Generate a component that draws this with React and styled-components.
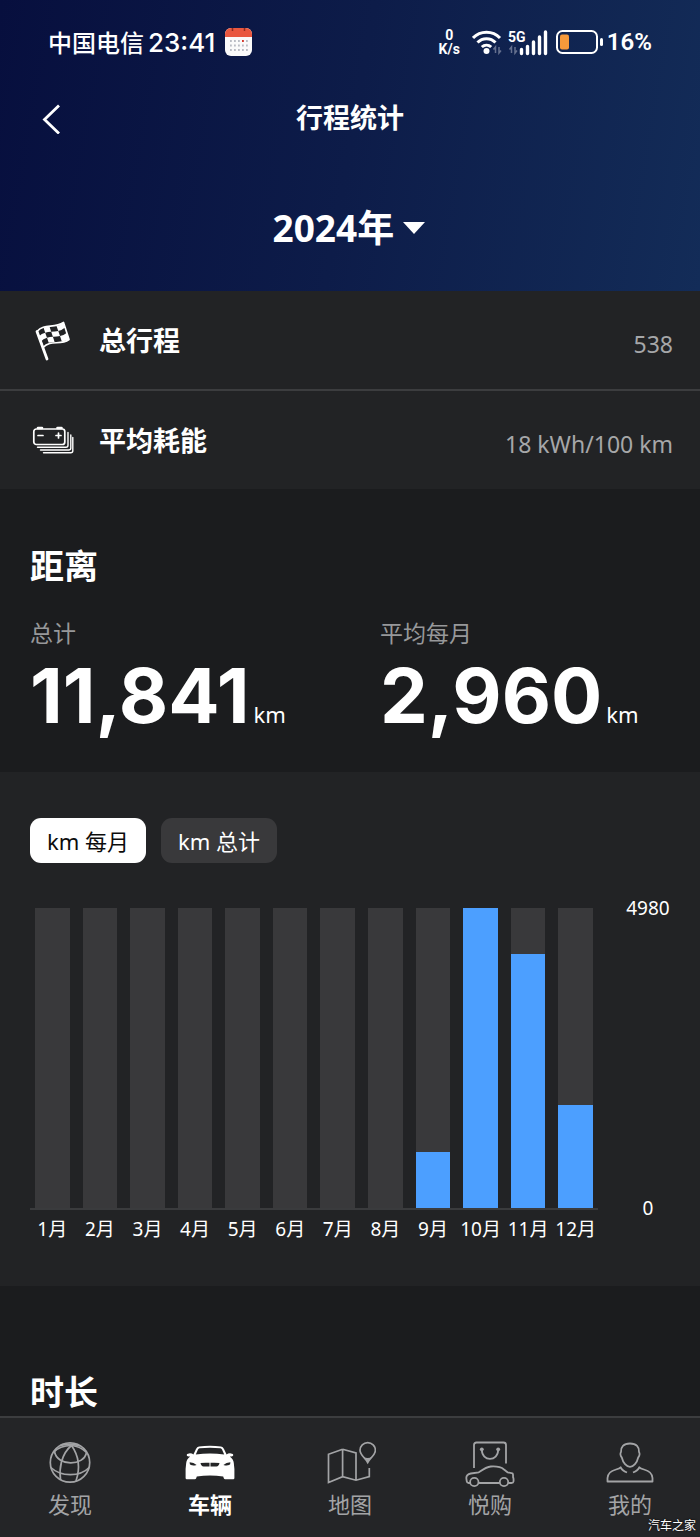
import { useState } from 'react'
import styled, { createGlobalStyle } from 'styled-components'

const GlobalStyle = createGlobalStyle`
  * {
    box-sizing: border-box;
  }

  body {
    margin: 0;
    background: #1b1c1e;
    color: #fff;
    font-family: "Noto Sans", "Noto Sans CJK SC", sans-serif;
  }

  button,
  select {
    font-family: inherit;
    color: inherit;
    border: 0;
    margin: 0;
    padding: 0;
    background: none;
    cursor: pointer;
  }

  svg {
    display: block;
    flex-shrink: 0;
  }
`

const Page = styled.div`
  display: flex;
  flex-direction: column;
  min-height: 100vh;
`

const Header = styled.header`
  background: linear-gradient(100deg, #070f3e 0%, #0d1c49 50%, #132c58 100%);
`

const StatusBar = styled.div`
  display: flex;
  justify-content: space-between;
  align-items: center;
  height: 84px;
  padding: 0 48px;
`

const StatusGroup = styled.div`
  display: flex;
  align-items: center;
  gap: 4px;
`

const Carrier = styled.span`
  padding-bottom: 2px;
  font-size: 24px;
  font-weight: 500;
`

const Clock = styled.span`
  margin-right: 6px;
  font-family: Inter, sans-serif;
  font-size: 26px;
  font-weight: 500;
`

const Speed = styled.span`
  display: flex;
  flex-direction: column;
  align-items: center;
  margin-right: 8px;
  font-family: Roboto, sans-serif;
  font-size: 14px;
  font-weight: 700;
  line-height: 14px;
`

const Percent = styled.span`
  font-family: Roboto, sans-serif;
  font-size: 24px;
  font-weight: 600;
`

const TitleBar = styled.div`
  display: grid;
  grid-template-columns: 1fr auto 1fr;
  align-items: center;
  height: 68px;
  padding: 0 36px;
`

const BackButton = styled.button`
  justify-self: start;
`

const Title = styled.h1`
  margin: 0;
  font-size: 27px;
  font-weight: 700;
  line-height: 36px;
`

const YearPicker = styled.label`
  display: flex;
  justify-content: center;
  align-items: center;
  gap: 7px;
  height: 139px;
  padding: 12px 2px 0 0;
`

const YearSelect = styled.select`
  appearance: none;
  font-size: 37px;
  font-weight: 700;
  line-height: 48px;

  option {
    color: #000;
  }
`

const Summary = styled.dl`
  margin: 0;
  background: #222325;
`

const SummaryRow = styled.div`
  display: flex;
  align-items: center;
  gap: 25px;
  box-sizing: content-box;
  height: 98px;
  padding: 0 27px 0 32px;

  & + & {
    border-top: 2px solid #3c3d3f;
  }
`

const SummaryLabel = styled.dt`
  flex: 1;
  padding-bottom: 2px;
  font-size: 27px;
  font-weight: 700;
`

const SummaryValue = styled.dd`
  margin: 0;
  padding-top: 8px;
  color: #a6a7a9;
  font-size: 23px;
`

const Section = styled.section`
  padding: ${({ $pad }) => $pad};
  background: ${({ $raised }) => ($raised ? '#222325' : '#1b1c1e')};
`

const Heading = styled.h2`
  margin: 0;
  padding: 0 30px;
  font-size: 34px;
  font-weight: 700;
  line-height: 48px;
`

const Totals = styled.div`
  display: grid;
  grid-template-columns: 1fr 1fr;
  margin-top: 27px;
`

const Total = styled.div`
  padding-left: 30px;
`

const TotalLabel = styled.div`
  color: #97989a;
  font-size: 23px;
  line-height: 32px;
`

const TotalValue = styled.div`
  display: flex;
  align-items: baseline;
  gap: 4px;
  margin-top: 6px;
  padding-bottom: 1px;
  font-family: Inter, sans-serif;
  font-size: 76px;
  font-weight: 700;
  line-height: 80px;
`

const Unit = styled.span`
  font-family: "Noto Sans", sans-serif;
  font-size: 22px;
  font-weight: 400;
  line-height: 32px;
`

const Tabs = styled.div`
  display: flex;
  gap: 15px;
  padding: 0 30px;
`

const Tab = styled.button`
  height: 45px;
  padding: 0 17px 2px;
  border-radius: 11px;
  background: ${({ $active }) => ($active ? '#fff' : '#39393b')};
  color: ${({ $active }) => ($active ? '#0c0c0c' : '#fff')};
  font-size: 22px;
`

const Chart = styled.div`
  display: grid;
  grid-template-columns: 1fr 100px;
  margin-top: 35px;
  padding: 0 2px 0 30px;
`

const Months = styled.div`
  display: grid;
  grid-template-columns: repeat(12, 1fr);
  gap: 13px;
  padding: 0 5px;
`

const Plot = styled(Months)`
  height: 302px;
  margin-top: 10px;
  border-bottom: 2px solid #3a3b3d;
`

const MonthLabels = styled(Months)`
  margin-top: 8px;
  font-size: 19px;
  line-height: 22px;
`

const MonthLabel = styled.span`
  display: flex;
  justify-content: center;
  min-width: 0;
  white-space: nowrap;
`

const Track = styled.div`
  display: flex;
  align-items: flex-end;
  background: #39393b;
`

const Fill = styled.div`
  width: 100%;
  background: #4c9fff;
`

const Scale = styled.div`
  display: flex;
  flex-direction: column;
  justify-content: space-between;
  align-items: center;
  height: 320px;
  font-size: 19px;
  line-height: 20px;
`

const TabBar = styled.nav`
  position: relative;
  display: grid;
  grid-template-columns: repeat(5, 1fr);
  padding: 22px 0 17px;
  border-top: 2px solid #3c3d3f;
  background: #242527;
`

const TabLink = styled.a`
  display: flex;
  flex-direction: column;
  align-items: center;
  color: ${({ $active }) => ($active ? '#fff' : '#a3a4a6')};
  font-size: 22px;
  font-weight: ${({ $active }) => ($active ? 700 : 400)};
  line-height: 32px;
  text-decoration: none;
`

const Watermark = styled.span`
  position: absolute;
  right: 4px;
  bottom: 2px;
  font-size: 12px;
  line-height: 18px;
  text-shadow: 0 0 2px #000;
`

const CalendarIcon = () => (
  <svg width="27" height="28" viewBox="0 0 27 28">
    <rect width="27" height="28" rx="6" fill="#fafafa" />
    <path d="M0 9V6a6 6 0 0 1 6-6h15a6 6 0 0 1 6 6v3z" fill="#e9573f" />
    <path d="M7.500 0v3M19.500 0v3" stroke="#8e2d22" strokeWidth="1.500" />
    <path d="M5 13h18M5 17.500h18M5 22h18" stroke="#b9bcc4" strokeWidth="1.800" strokeDasharray="1.800 2.200" />
    <path d="M17 13h1.800" stroke="#d8392b" strokeWidth="2" />
  </svg>
)

const WifiIcon = () => (
  <svg width="32" height="26" viewBox="0 0 32 26" fill="none" stroke="#fff" strokeWidth="3">
    <path d="M1 9a18.500 18.500 0 0 1 27 0M5.500 13.500a12.500 12.500 0 0 1 18 0M9.800 18a7 7 0 0 1 9.400 0" />
    <circle cx="14.500" cy="22" r="3" fill="#fff" stroke="none" />
    <path d="M23.500 24v-6l-2 2.500M27 18v6l2-2.500" stroke="#66718f" strokeWidth="1.500" />
  </svg>
)

const SignalIcon = () => (
  <svg width="44" height="27" viewBox="0 0 44 27">
    <text x="0" y="13" fill="#fff" fontFamily="Roboto, sans-serif" fontSize="14" fontWeight="700">5G</text>
    <path d="M3.500 24v-6l-2 2.500M7 18v6l2-2.500" fill="none" stroke="#66718f" strokeWidth="1.500" />
    <path d="M13.500 24.500v-4M19.500 24.500v-7M25.500 24.500V13M31.500 24.500V8M37.500 24.500V3" stroke="#fff" strokeWidth="3.400" strokeLinecap="round" />
  </svg>
)

const BatteryIcon = () => (
  <svg width="47" height="24" viewBox="0 0 47 24">
    <rect x="1" y="1" width="40" height="22" rx="5.500" fill="none" stroke="#fff" strokeWidth="2" />
    <rect x="4" y="4.500" width="9" height="15" rx="2" fill="#f79a3b" />
    <rect x="44" y="8" width="3" height="8" rx="1.500" fill="#fff" />
  </svg>
)

const BackIcon = () => (
  <svg width="32" height="32" viewBox="0 0 32 32" fill="none" stroke="#fff" strokeWidth="2.800">
    <path d="M23 3.500 8.500 17.500 23 31.500" />
  </svg>
)

const CaretIcon = () => (
  <svg width="24" height="12" viewBox="0 0 24 12">
    <path d="M1 0h22L12 12z" fill="#fff" />
  </svg>
)

const FlagIcon = () => (
  <svg width="42" height="42" viewBox="0 0 42 42" fill="none" stroke="#fff">
    <path d="M5 12.500 15 40" strokeWidth="2.800" strokeLinecap="round" />
    <path d="M5 12.500C12 4 22 10 31.500 3.500L37 20.500C28 27 19 20 11 28.500z" strokeWidth="1.700" strokeLinejoin="round" />
    <g fill="#fff" stroke="none">
      <path d="M11.500 8.500q3-1.200 6-.9l1.700 5.200q-3-.1-6 1z" />
      <path d="M24.500 7q4-.7 7-3.500l1.600 5q-3 2.600-6.800 3.500z" />
      <path d="M6.800 17.600q2.800-3 6.400-3.800l1.800 5q-3.800 1-6.300 4z" />
      <path d="M19.200 12.800q3.600 0 7.100-.8l1.700 5q-3.500.8-7.100.7z" />
      <path d="M15 18.800q3-1 5.900-1.100l1.700 5.200q-3-.1-5.900.9z" />
      <path d="M28 17q4-.8 7-3.300l2 6.800q-3.400 1.700-7.200 2z" />
    </g>
  </svg>
)

const BatteryPackIcon = () => (
  <svg width="42" height="28" viewBox="0 0 42 28" fill="none" stroke="#fff" strokeWidth="1.700" strokeLinecap="round" strokeLinejoin="round">
    <rect x="1.800" y="3" width="31" height="15.500" rx="2.500" />
    <path d="M6 2h4M25.500 2h4" strokeWidth="2.600" />
    <path d="M6 9.500h5M24 9.500h5M26.500 7v5" />
    <path d="M5.500 21.300H34q2 0 2-2V6.500M8.500 24h28.300q2 0 2-2V9M11.500 26.800h27.300q2 0 2-2V11.500" strokeWidth="1.400" />
  </svg>
)

const GlobeIcon = () => (
  <svg width="52" height="48" viewBox="0 0 52 48" fill="none" stroke="currentColor" strokeWidth="1.700">
    <circle cx="26" cy="22.500" r="19.700" />
    <path d="M10.500 11.500C13 26.500 40 26.500 42.500 12.500" />
    <path d="M6.800 27.500C17 37 36 37 45.200 27.500" />
    <path d="M27.500 5.500C17 14 15 29 16.500 39.500M27.500 5.500C35 16 36 29 32 41" />
    <path d="M27.500 5.500C20 5.500 13 8.500 9.500 12.500M27.500 5.500C34 6 39 9 42.500 12.500" />
    <path d="M16 5.500q11.500-2.500 20.500.5" />
  </svg>
)

const CarIcon = () => (
  <svg width="52" height="48" viewBox="0 0 52 48" fill="currentColor">
    <path fillRule="evenodd" d="M15 6.500Q26 5 37 6.500q2 .4 3 2.500l2.600 5.500q1.600-1.400 4.400-1.100 2.500.2 2.300 1.600-.2 1.500-3.500 1.500 3.700 2.600 4 6.500l.6 6V38q0 1.200-1.200 1.200h-8q-1 0-1.400-1l-.6-1.800Q26 34.600 12.800 36.400l-.6 1.800q-.4 1-1.400 1h-8q-1.200 0-1.200-1.200v-9l.6-6q.3-3.900 4-6.500-3.300 0-3.500-1.500-.2-1.400 2.300-1.600 2.800-.3 4.400 1.100L12 9q1-2.100 3-2.500zM15.500 8.300q-1 .2-1.500 1.300l-2.200 4.800q14.200-2 28.400 0L38 9.600q-.5-1.100-1.500-1.300-10.500-1.300-21 0z" />
    <path d="M5.600 22.200q4.200.1 7 2.700-3 .9-5.700.2-1.400-.6-1.300-2.900zM46.400 22.200q-4.200.1-7 2.700 3 .9 5.700.2 1.400-.6 1.300-2.900zM16.500 23q4.200-.6 9-.2v3.600h-6q-2.300 0-3-3.400zM35.500 23q-4.200-.6-9-.2v3.600h6q2.300 0 3-3.400z" fill="#242527" />
  </svg>
)

const MapIcon = () => (
  <svg width="52" height="48" viewBox="0 0 52 48" fill="none" stroke="currentColor" strokeWidth="1.700">
    <path d="M18.600 9.300 4.500 14.300v28.200l14.100-5.800L32 40.200l13.300-3.700v-8.500M18.600 9.300 32 13v27.200M18.600 9.300v27.400" />
    <path d="M43.700 22.500C41 17.500 36 15 36 10.300a7.700 7.700 0 0 1 15.400 0c0 4.700-5 7.200-7.700 12.200z" />
    <path d="M39.500 16.500q4.200 3 8.400 0l-4.200 6z" fill="currentColor" stroke="none" />
  </svg>
)

const ShopIcon = () => (
  <svg width="52" height="48" viewBox="0 0 52 48" fill="none" stroke="currentColor" strokeWidth="1.800" strokeLinejoin="round">
    <path d="M10 28V5q0-2.500 2.500-2.500h27Q42 2.500 42 5v18.500" />
    <path d="M17.800 9.500c0 12.500 16.400 12.500 16.400 0" />
    <g fill="currentColor" stroke="none">
      <circle cx="17.800" cy="9.300" r="1.900" />
      <circle cx="34.200" cy="9.300" r="1.900" />
    </g>
    <path d="M6 43H4.500q-1.500 0-1.800-2l-.4-3q0-3.500 4.500-4.500l8-1.200q8-5.600 12-5.800 9-.6 13.200 3l3.500 2.800 5 1q.8 1.200.5 3.700.8 1.500.5 4.500-.2 1.500-2 1.500h-3.300M14.700 43h21" />
    <circle cx="10.300" cy="42" r="4.200" />
    <circle cx="40" cy="42" r="4.200" />
  </svg>
)

const PersonIcon = () => (
  <svg width="52" height="48" viewBox="0 0 52 48" fill="none" stroke="currentColor" strokeWidth="1.800" strokeLinejoin="round">
    <path d="M26 3.500c6.500 0 9.300 3.500 9 8.500 1 1.300.7 4-.8 5.500-1.200 5.300-4.700 9.300-8.200 9.300s-7-4-8.200-9.300C16.300 16 16 13.300 17 12c-.3-5 2.500-8.500 9-8.500z" />
    <path d="M23 32.500q-5-2-6.300-5.200-1 1.200-4.700 2.200-8 2-8.500 8.500v3.500h45V38q-.5-6.500-8.500-8.500-3.700-1-4.700-2.200-1.300 3.200-6.300 5.200" />
  </svg>
)

const MAX_KM = 4980
const monthlyKm = [0, 0, 0, 0, 0, 0, 0, 0, 929, 4980, 4216, 1716]

const tabs = ['km 每月', 'km 总计']

const links = [
  { label: '发现', icon: GlobeIcon },
  { label: '车辆', icon: CarIcon, active: true },
  { label: '地图', icon: MapIcon },
  { label: '悦购', icon: ShopIcon },
  { label: '我的', icon: PersonIcon },
]

export default function App() {
  const [tab, setTab] = useState(0)

  return (
    <Page>
      <GlobalStyle />
      <Header>
        <StatusBar>
          <StatusGroup>
            <Carrier>中国电信</Carrier>
            <Clock>23:41</Clock>
            <CalendarIcon />
          </StatusGroup>
          <StatusGroup>
            <Speed>
              <span>0</span>
              <span>K/s</span>
            </Speed>
            <WifiIcon />
            <SignalIcon />
            <BatteryIcon />
            <Percent>16%</Percent>
          </StatusGroup>
        </StatusBar>
        <TitleBar>
          <BackButton aria-label="返回">
            <BackIcon />
          </BackButton>
          <Title>行程统计</Title>
        </TitleBar>
        <YearPicker>
          <YearSelect aria-label="年份" defaultValue="2024">
            <option value="2024">2024年</option>
            <option value="2023">2023年</option>
          </YearSelect>
          <CaretIcon />
        </YearPicker>
      </Header>

      <Summary>
        <SummaryRow>
          <FlagIcon />
          <SummaryLabel>总行程</SummaryLabel>
          <SummaryValue>538</SummaryValue>
        </SummaryRow>
        <SummaryRow>
          <BatteryPackIcon />
          <SummaryLabel>平均耗能</SummaryLabel>
          <SummaryValue>18 kWh/100 km</SummaryValue>
        </SummaryRow>
      </Summary>

      <Section $pad="53px 0 36px">
        <Heading>距离</Heading>
        <Totals>
          <Total>
            <TotalLabel>总计</TotalLabel>
            <TotalValue>11,841<Unit>km</Unit></TotalValue>
          </Total>
          <Total>
            <TotalLabel>平均每月</TotalLabel>
            <TotalValue>2,960<Unit>km</Unit></TotalValue>
          </Total>
        </Totals>
      </Section>

      <Section $raised $pad="46px 0">
        <Tabs>
          {tabs.map((label, i) => (
            <Tab key={label} $active={i === tab} onClick={() => setTab(i)}>{label}</Tab>
          ))}
        </Tabs>
        <Chart>
          <div>
            <Plot>
              {monthlyKm.map((km, i) => (
                <Track key={i}>
                  <Fill style={{ height: `${(km / MAX_KM) * 100}%` }} />
                </Track>
              ))}
            </Plot>
            <MonthLabels>
              {monthlyKm.map((km, i) => (
                <MonthLabel key={i}>{i + 1}月</MonthLabel>
              ))}
            </MonthLabels>
          </div>
          <Scale>
            <span>{MAX_KM}</span>
            <span>0</span>
          </Scale>
        </Chart>
      </Section>

      <Section $pad="82px 0 0">
        <Heading>时长</Heading>
      </Section>

      <TabBar>
        {links.map(({ label, icon: Icon, active }) => (
          <TabLink key={label} href="#" $active={active}>
            <Icon />
            {label}
          </TabLink>
        ))}
        <Watermark>汽车之家</Watermark>
      </TabBar>
    </Page>
  )
}
